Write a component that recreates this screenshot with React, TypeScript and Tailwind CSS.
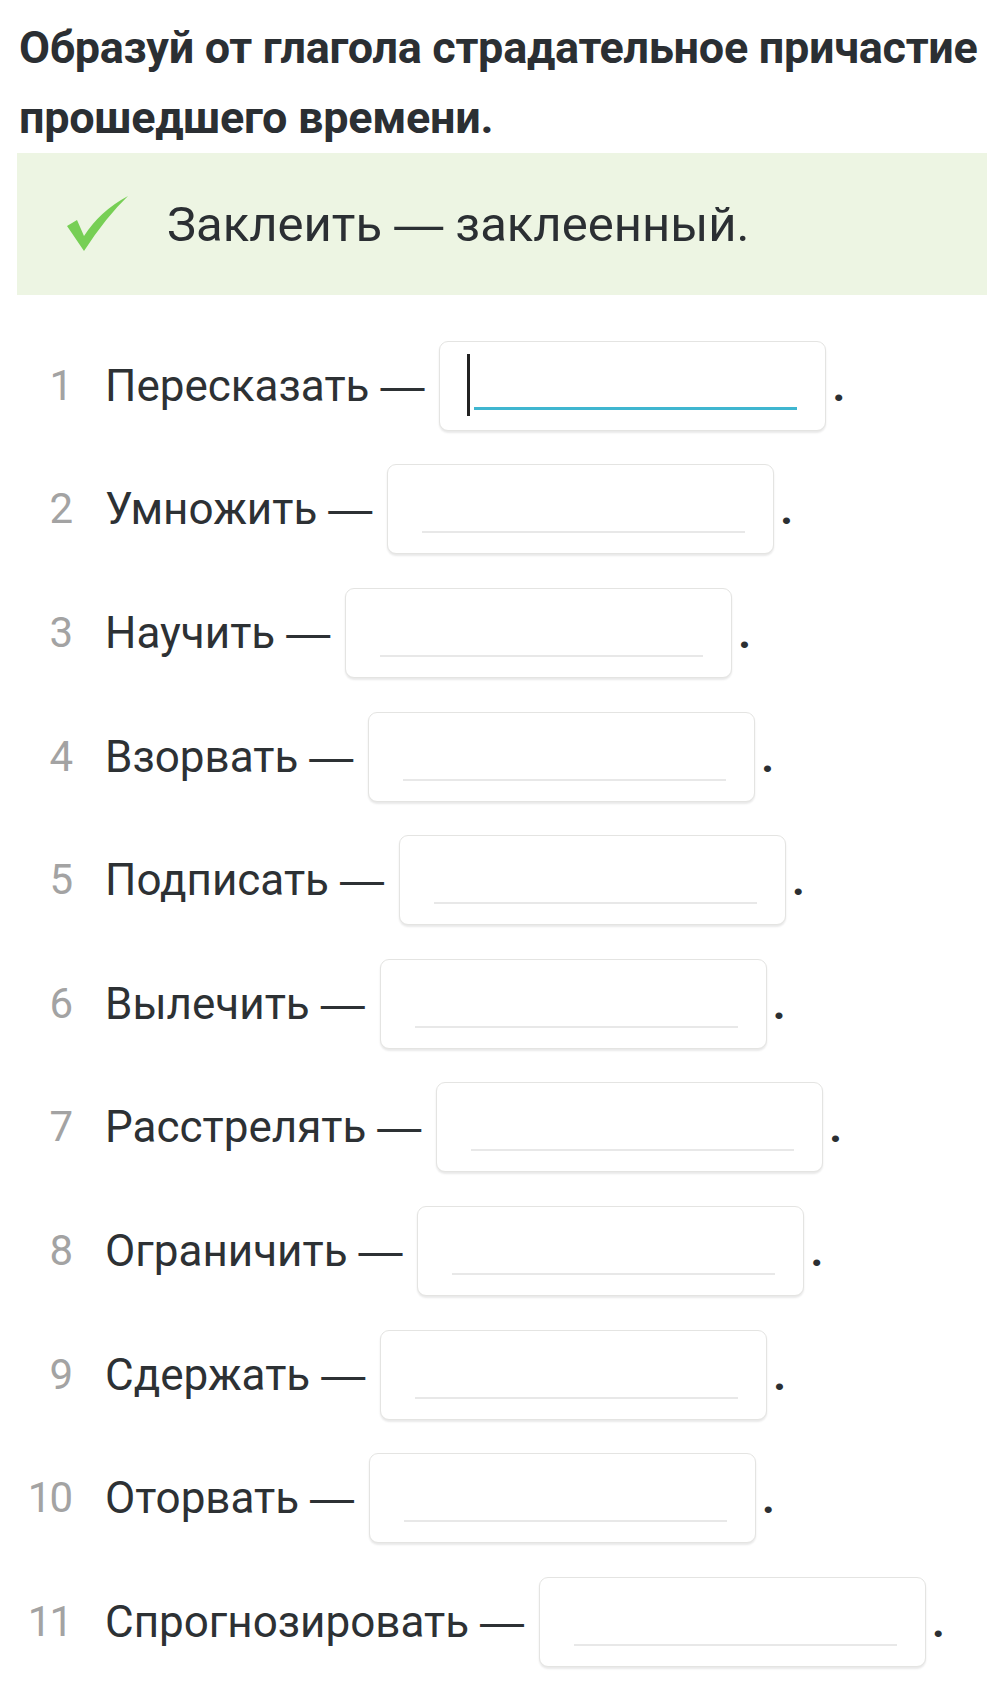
import React from 'react';

const items = [
  'Пересказать',
  'Умножить',
  'Научить',
  'Взорвать',
  'Подписать',
  'Вылечить',
  'Расстрелять',
  'Ограничить',
  'Сдержать',
  'Оторвать',
  'Спрогнозировать',
];

function CheckMark() {
  return (
    <svg width="62" height="56" viewBox="0 0 62 56" className="shrink-0">
      <path d="M0 30 L10 24 L17 40 Q33 15 61 0 Q39 21 17 55 Z" fill="#77cf55" />
    </svg>
  );
}

function AnswerBox({ active }: { active?: boolean }) {
  return (
    <div className="w-[387px] h-[90px] shrink-0 rounded-[9px] border border-[#e4e4e2] bg-white shadow-[0_2px_2px_rgba(0,0,0,0.09)] flex items-end pb-[20px] pl-[27px] pr-[28px]">
      {active ? (
        <div className="flex items-end w-full">
          <div className="w-[3px] h-[62px] -mb-[6px] bg-[#222]" />
          <div className="flex-1 h-[3px] ml-[4px] bg-[#3fb6d0]" />
        </div>
      ) : (
        <div className="w-full ml-[7px] h-[2px] bg-[#e8e8e8]" />
      )}
    </div>
  );
}

const dash = <span style={{ fontFamily: '"Liberation Sans", sans-serif' }}>—</span>;

export default function App() {
  return (
    <div className="w-[987px] min-h-[1685px] bg-white pt-[13px] pl-[17px] text-[#2b2f33]" style={{ fontFamily: 'Roboto, "Noto Sans", sans-serif' }}>
      <h1 className="pl-[2px] text-[45px] leading-[70px] font-bold tracking-[-0.3px] whitespace-nowrap">
        Образуй от глагола страдательное причастие
        <br />
        прошедшего времени.
      </h1>

      <div className="h-[142px] bg-[#edf5e3] flex items-center pl-[50px]">
        <CheckMark />
        <span className="ml-[38px] text-[49px] leading-none">Заклеить {dash} заклеенный.</span>
      </div>

      <div className="mt-[29px] flex flex-col">
        {items.map((word, i) => (
          <div key={word} className="h-[123.6px] flex items-center">
            <span className="w-[54px] text-right text-[42px] leading-none text-[#a3a3a3] tracking-[-2px]">{i + 1}</span>
            <span className="ml-[34px] text-[44px] leading-none text-[#2d3134]">{word} {dash}</span>
            <div className="ml-[15px]">
              <AnswerBox active={i === 0} />
            </div>
            <span className="ml-[6px] text-[44px] leading-none font-bold">.</span>
          </div>
        ))}
      </div>
    </div>
  );
}
